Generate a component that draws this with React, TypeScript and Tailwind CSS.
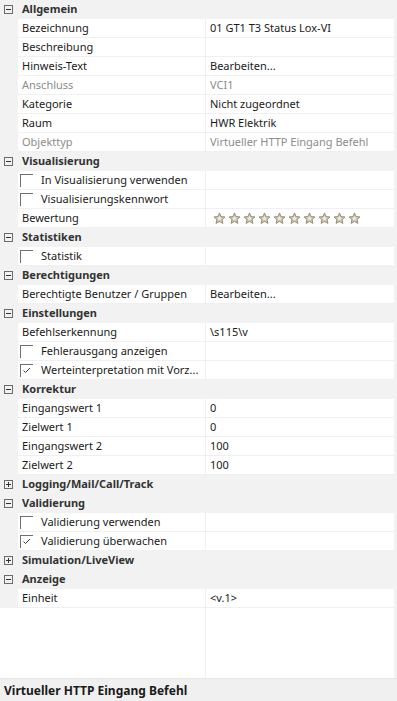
import React from "react";

type Row =
  | { kind: "cat"; label: string; open?: boolean }
  | { kind: "prop"; label: string; value?: string; muted?: boolean }
  | { kind: "check"; label: string; checked?: boolean }
  | { kind: "stars"; label: string };

const rows: Row[] = [
  { kind: "cat", label: "Allgemein", open: true },
  { kind: "prop", label: "Bezeichnung", value: "01 GT1 T3 Status Lox-VI" },
  { kind: "prop", label: "Beschreibung", value: "" },
  { kind: "prop", label: "Hinweis-Text", value: "Bearbeiten..." },
  { kind: "prop", label: "Anschluss", value: "VCI1", muted: true },
  { kind: "prop", label: "Kategorie", value: "Nicht zugeordnet" },
  { kind: "prop", label: "Raum", value: "HWR Elektrik" },
  { kind: "prop", label: "Objekttyp", value: "Virtueller HTTP Eingang Befehl", muted: true },
  { kind: "cat", label: "Visualisierung", open: true },
  { kind: "check", label: "In Visualisierung verwenden" },
  { kind: "check", label: "Visualisierungskennwort" },
  { kind: "stars", label: "Bewertung" },
  { kind: "cat", label: "Statistiken", open: true },
  { kind: "check", label: "Statistik" },
  { kind: "cat", label: "Berechtigungen", open: true },
  { kind: "prop", label: "Berechtigte Benutzer / Gruppen", value: "Bearbeiten..." },
  { kind: "cat", label: "Einstellungen", open: true },
  { kind: "prop", label: "Befehlserkennung", value: "\\s115\\v" },
  { kind: "check", label: "Fehlerausgang anzeigen" },
  { kind: "check", label: "Werteinterpretation mit Vorz...", checked: true },
  { kind: "cat", label: "Korrektur", open: true },
  { kind: "prop", label: "Eingangswert 1", value: "0" },
  { kind: "prop", label: "Zielwert 1", value: "0" },
  { kind: "prop", label: "Eingangswert 2", value: "100" },
  { kind: "prop", label: "Zielwert 2", value: "100" },
  { kind: "cat", label: "Logging/Mail/Call/Track", open: false },
  { kind: "cat", label: "Validierung", open: true },
  { kind: "check", label: "Validierung verwenden" },
  { kind: "check", label: "Validierung überwachen", checked: true },
  { kind: "cat", label: "Simulation/LiveView", open: false },
  { kind: "cat", label: "Anzeige", open: true },
  { kind: "prop", label: "Einheit", value: "<v.1>" },
];

const ExpandBox = ({ open }: { open?: boolean }) => (
  <svg width="9" height="9" viewBox="0 0 9 9" className="block">
    <rect x="0.5" y="0.5" width="8" height="8" fill="none" stroke="#6b6b6b" />
    <line x1="2" y1="4.5" x2="7" y2="4.5" stroke="#333" />
    {!open && <line x1="4.5" y1="2" x2="4.5" y2="7" stroke="#333" />}
  </svg>
);

const Check = ({ checked }: { checked?: boolean }) => (
  <div className="w-[13px] h-[13px] border-t border-l border-[#6f6f6f] bg-white shrink-0">
    {checked && (
      <svg width="12" height="12" viewBox="0 0 12 12" className="block">
        <polyline points="2.5,5.5 4.5,7.5 9,3" fill="none" stroke="#3a3a3a" strokeWidth="1" />
      </svg>
    )}
  </div>
);

const Star = () => (
  <svg width="13" height="13" viewBox="0 0 24 24" className="block">
    <path
      d="M12 1.8l3 6.6 7.2.7-5.4 4.9 1.6 7.1L12 17.4l-6.4 3.7 1.6-7.1L1.8 9.1 9 8.4z"
      fill="#c9c1a9"
      stroke="#8f8772"
      strokeWidth="1.6"
      strokeLinejoin="round"
    />
    <path d="M12 7l1.4 3.2 3.4.3-2.6 2.3.8 3.3L12 14.4l-3 1.7.8-3.3-2.6-2.3 3.4-.3z" fill="#efebe0" />
  </svg>
);

const GridRow = ({ row }: { row: Row }) => {
  if (row.kind === "cat") {
    return (
      <div className="flex items-center h-[19px] bg-[#f2f2f2]">
        <div className="w-[18px] pl-[4px] shrink-0">
          <ExpandBox open={row.open} />
        </div>
        <span className="pl-[4px] pb-[2px] font-bold text-[#333333]">{row.label}</span>
      </div>
    );
  }
  return (
    <div className="flex h-[19px] bg-[#f2f2f2]">
      <div className="w-[18px] shrink-0" />
      <div className="flex w-[376px] bg-white border-b border-[#f0f0f0]">
        <div className="w-[187px] flex items-center shrink-0 overflow-hidden whitespace-nowrap">
          {row.kind === "check" ? (
            <div className="flex items-center pl-[2px] gap-[8px]">
              <Check checked={row.checked} />
              <span className="pb-px text-[#1a1a1a]">{row.label}</span>
            </div>
          ) : (
            <span className={"pl-[4px] pb-px " + (row.kind === "prop" && row.muted ? "text-[#8c8c8c]" : "text-[#1a1a1a]")}>
              {row.label}
            </span>
          )}
        </div>
        <div className="w-px bg-[#f0f0f0] shrink-0" />
        <div className="flex-1 flex items-center overflow-hidden whitespace-nowrap">
          {row.kind === "stars" ? (
            <div className="flex pl-[7px] gap-[2px]">
              {Array.from({ length: 10 }).map((_, i) => (
                <Star key={i} />
              ))}
            </div>
          ) : row.kind === "prop" ? (
            <span className={"pl-[4px] pb-px " + (row.muted ? "text-[#8c8c8c]" : "text-[#1a1a1a]")}>{row.value}</span>
          ) : null}
        </div>
      </div>
    </div>
  );
};

export default function App() {
  return (
    <div className="w-[397px] h-[701px] flex flex-col bg-[#f2f2f2] text-[11px] leading-[17px] font-['Segoe_UI','Noto_Sans',sans-serif] overflow-hidden">
      <div className="flex flex-col">
        {rows.map((r, i) => (
          <GridRow key={i} row={r} />
        ))}
      </div>
      <div className="flex-1 flex">
        <div className="w-[205px] bg-white" />
        <div className="w-px bg-[#f0f0f0]" />
        <div className="w-[188px] bg-white" />
      </div>
      <div className="h-[23px] flex items-center px-[4px] bg-[#f0f0f0] border-t border-[#e6e6e6]">
        <span className="font-bold text-[#1a1a1a] text-[12px]">Virtueller HTTP Eingang Befehl</span>
      </div>
    </div>
  );
}
